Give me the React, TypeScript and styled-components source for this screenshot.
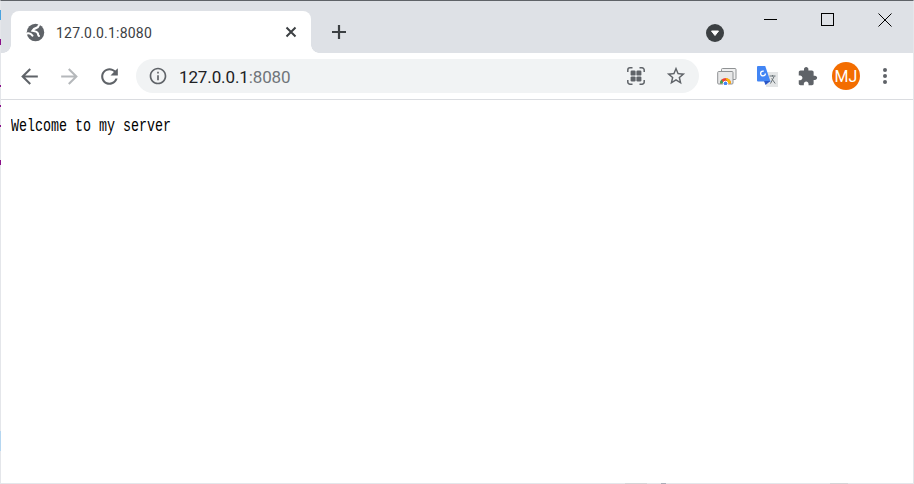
import React from "react";
import styled, { createGlobalStyle } from "styled-components";

const Global = createGlobalStyle`
  html, body { margin: 0; padding: 0; background: #fff; overflow: hidden; }
  #root { width: 914px; height: 484px; }
`;

const Win = styled.div`
  position: relative;
  width: 914px;
  height: 484px;
  box-sizing: border-box;
  display: flex;
  flex-direction: column;
  background: #fff;
  border-top: 1px solid #5f6368;
  border-left: 1px solid #e4e6ea;
  border-right: 1px solid #e4e6ea;
  border-bottom: 1px solid #e4e6ea;
  font-family: "Roboto", "Liberation Sans", sans-serif;
`;

const EdgeMark = styled.i<{ $top: number; $h: number; $c: string }>`
  position: absolute;
  left: -1px;
  top: ${(p) => p.$top - 1}px;
  width: 1px;
  height: ${(p) => p.$h}px;
  background: ${(p) => p.$c};
`;

const BottomMark = styled.i<{ $left: number; $w: number; $c: string }>`
  position: absolute;
  bottom: -1px;
  left: ${(p) => p.$left - 1}px;
  width: ${(p) => p.$w}px;
  height: 1px;
  background: ${(p) => p.$c};
`;

const TabStrip = styled.div`
  height: 52px;
  flex: none;
  background: #dee1e6;
  display: flex;
  align-items: flex-end;
  padding-left: 10px;
`;

const Tab = styled.div`
  position: relative;
  width: 300px;
  height: 42px;
  background: #fff;
  border-radius: 8px 8px 0 0;
  display: flex;
  align-items: center;
  padding: 0 12px 0 14px;
  box-sizing: border-box;
  &::before, &::after {
    content: "";
    position: absolute;
    bottom: 0;
    width: 8px;
    height: 8px;
    background: radial-gradient(circle at var(--cx) 0, #dee1e6 7.5px, #fff 8px);
  }
  &::before { left: -8px; --cx: 0; }
  &::after { right: -8px; --cx: 100%; }
`;

const TabTitle = styled.span`
  flex: 1;
  margin: 1px 0 0 10px;
  font-size: 14px;
  color: #3c4043;
  letter-spacing: 0.2px;
`;

const NewTab = styled.div`
  width: 28px;
  height: 28px;
  margin: 0 0 7px 14px;
  display: flex;
  align-items: center;
  justify-content: center;
`;

const Spacer = styled.div`
  flex: 1;
`;

const MediaBtn = styled.div`
  margin: 0 0 11px 0;
  width: 18px;
  height: 18px;
  display: flex;
`;

const Captions = styled.div`
  display: flex;
  align-self: flex-start;
  margin-left: 18px;
`;

const Caption = styled.div`
  width: 57px;
  height: 29px;
  display: flex;
  align-items: center;
  justify-content: center;
  padding-top: 8px;
  box-sizing: border-box;
`;

const Toolbar = styled.div`
  height: 46px;
  flex: none;
  box-sizing: border-box;
  display: flex;
  align-items: center;
  padding: 0 0 0 8px;
  background: #fff;
`;

const NavBtn = styled.div<{ $w?: number }>`
  width: ${(p) => p.$w ?? 40}px;
  height: 34px;
  flex: none;
  display: flex;
  align-items: center;
  justify-content: center;
`;

const Divider = styled.div`
  height: 1px;
  flex: none;
  background: #dadce0;
`;

const Omnibox = styled.div`
  width: 563px;
  height: 34px;
  flex: none;
  margin: 0 8px 0 7px;
  border-radius: 17px;
  background: #f1f3f4;
  display: flex;
  align-items: center;
  padding: 0 3px 0 12px;
  box-sizing: border-box;
`;

const Url = styled.div`
  flex: 1;
  margin: 1px 0 0 11px;
  font-size: 17px;
  color: #202124;
  letter-spacing: -0.12px;
`;

const UrlPort = styled.span`
  color: #70757a;
`;

const Avatar = styled.div`
  width: 28px;
  height: 28px;
  border-radius: 50%;
  background: #f36d00;
  color: #fff;
  font-size: 16px;
  display: flex;
  align-items: center;
  justify-content: center;
`;

const Page = styled.main`
  flex: 1;
  padding: 15px 10px;
  color: #000;
`;

const PageText = styled.span`
  display: inline-block;
  font-family: "Liberation Mono", monospace;
  font-size: 14.5px;
  line-height: 20px;
  white-space: nowrap;
  transform: scale(0.92, 1.25);
  transform-origin: left center;
`;

export default function App() {
  return (
    <Win>
      <Global />
      <EdgeMark $top={10} $h={10} $c="#4aa3df" />
      <EdgeMark $top={39} $h={6} $c="#8a0f8a" />
      <EdgeMark $top={85} $h={2} $c="#8a0f8a" />
      <EdgeMark $top={105} $h={2} $c="#8a0f8a" />
      <EdgeMark $top={125} $h={2} $c="#8a0f8a" />
      <EdgeMark $top={160} $h={5} $c="#8a0f8a" />
      <EdgeMark $top={431} $h={20} $c="#b5d6f0" />
      <BottomMark $left={625} $w={22} $c="#d4d5d8" />
      <BottomMark $left={661} $w={5} $c="#a9adb8" />
      <BottomMark $left={830} $w={18} $c="#d4d5d8" />
      <TabStrip>
        <Tab>
          <svg width="21" height="21" viewBox="0 0 24 24">
            <circle cx="12" cy="12" r="10" fill="#5f6368" />
            <path d="M3 13c3-.5 4 .5 5.5 2.5M16 3.5c-.5 2-1.5 3-3.5 3.5-2 .5-3 1.5-4 3 2.5.5 5 .5 6 2.5.8 1.5 0 3 1.5 3.5" fill="none" stroke="#fff" strokeWidth="2.4" strokeLinecap="round" />
          </svg>
          <TabTitle>127.0.0.1:8080</TabTitle>
          <svg width="16" height="16" viewBox="0 0 16 16" stroke="#3c4043" strokeWidth="2" fill="none">
            <path d="M3.5 3.5l9 9M12.5 3.5l-9 9" />
          </svg>
        </Tab>
        <NewTab>
          <svg width="16" height="16" viewBox="0 0 16 16" stroke="#3c4043" strokeWidth="2.2" fill="none">
            <path d="M8 1v14M1 8h14" />
          </svg>
        </NewTab>
        <Spacer />
        <MediaBtn>
          <svg width="18" height="18" viewBox="0 0 18 18">
            <circle cx="9" cy="9" r="9" fill="#3c4043" />
            <path d="M5.5 7h7L9 11.5z" fill="#fff" stroke="#fff" strokeWidth="1" strokeLinejoin="round" />
          </svg>
        </MediaBtn>
        <Captions>
          <Caption>
            <svg width="14" height="2" viewBox="0 0 14 2"><path d="M0 .5h13" stroke="#000" strokeWidth="1" /></svg>
          </Caption>
          <Caption>
            <svg width="13" height="13" viewBox="0 0 13 13"><rect x=".5" y=".5" width="12" height="12" fill="none" stroke="#000" /></svg>
          </Caption>
          <Caption>
            <svg width="14" height="14" viewBox="0 0 14 14"><path d="M.5.5l13 13M13.5.5l-13 13" stroke="#000" strokeWidth="1" fill="none" /></svg>
          </Caption>
        </Captions>
      </TabStrip>
      <Toolbar>
        <NavBtn>
          <svg width="25" height="25" viewBox="0 0 24 24" fill="#5f6368">
            <path d="M20 11H7.83l5.59-5.59L12 4l-8 8 8 8 1.41-1.41L7.83 13H20v-2z" />
          </svg>
        </NavBtn>
        <NavBtn>
          <svg width="25" height="25" viewBox="0 0 24 24" fill="#b5b8bb">
            <path d="M12 4l-1.41 1.41L16.17 11H4v2h12.17l-5.58 5.59L12 20l8-8z" />
          </svg>
        </NavBtn>
        <NavBtn>
          <svg width="25" height="25" viewBox="0 0 24 24" fill="#5f6368">
            <path d="M17.65 6.35C16.2 4.9 14.21 4 12 4c-4.42 0-7.99 3.58-7.99 8s3.57 8 7.99 8c3.73 0 6.84-2.55 7.73-6h-2.08c-.82 2.33-3.04 4-5.65 4-3.31 0-6-2.69-6-6s2.69-6 6-6c1.66 0 3.14.69 4.22 1.78L13 11h7V4l-2.35 2.35z" />
          </svg>
        </NavBtn>
        <Omnibox>
          <svg width="20" height="20" viewBox="0 0 24 24" fill="#5f6368">
            <path d="M11 7h2v2h-2zm0 4h2v6h-2zm1-9C6.48 2 2 6.48 2 12s4.48 10 10 10 10-4.48 10-10S17.52 2 12 2zm0 18c-4.41 0-8-3.59-8-8s3.59-8 8-8 8 3.59 8 8-3.59 8-8 8z" />
          </svg>
          <Url>127.0.0.1<UrlPort>:8080</UrlPort></Url>
          <NavBtn $w={40}>
            <svg width="18" height="18" viewBox="0 0 18 18" fill="#5f6368">
              <rect x="3.6" y="3.6" width="5" height="5" rx="1.2" />
              <rect x="9.4" y="3.6" width="5" height="5" rx="1.2" />
              <rect x="3.6" y="9.4" width="5" height="5" rx="1.2" />
              <rect x="9.4" y="9.4" width="5" height="5" rx="1.2" />
              <path d="M.8 5V3A2.2 2.2 0 0 1 3 .8h2.5M12.5.8H15A2.2 2.2 0 0 1 17.2 3v2M17.2 13v2a2.2 2.2 0 0 1-2.2 2.2h-2.5M5.5 17.2H3A2.2 2.2 0 0 1 .8 15v-2" fill="none" stroke="#5f6368" strokeWidth="1.5" />
            </svg>
          </NavBtn>
          <NavBtn $w={40}>
            <svg width="22" height="22" viewBox="0 0 24 24" fill="#5f6368">
              <path d="M22 9.24l-7.19-.62L12 2 9.19 8.63 2 9.24l5.46 4.73L5.82 21 12 17.27 18.18 21l-1.63-7.03L22 9.24zM12 15.4l-3.76 2.27 1-4.28-3.32-2.88 4.38-.38L12 6.1l1.71 4.04 4.38.38-3.32 2.88 1 4.28L12 15.4z" />
            </svg>
          </NavBtn>
        </Omnibox>
        <NavBtn>
          <svg width="20" height="17" viewBox="0 0 20 17">
            <rect x="4.5" y=".5" width="14.5" height="11" rx="1" fill="#f0f0f0" stroke="#8f9294" />
            <rect x=".7" y="3.5" width="15.3" height="12.5" rx="1" fill="#e8e8e8" stroke="#8f9294" />
            <path d="M3 15.5a5.5 5.5 0 0 1 11 0z" fill="#ea4335" />
            <path d="M8.5 10A5.5 5.5 0 0 1 14 15.5h-3z" fill="#fbbc05" />
            <path d="M3 15.5a5.5 5.5 0 0 1 1.6-3.9l1.9 3.9z" fill="#34a853" />
            <circle cx="8.5" cy="15.5" r="2.3" fill="#4285f4" stroke="#fff" />
          </svg>
        </NavBtn>
        <NavBtn>
          <svg width="21" height="21" viewBox="0 0 21 21">
            <rect x="9" y="6" width="12" height="15" fill="#e3e5e6" />
            <path d="M12.5 10h6M15.5 9v1.5M13.5 17.5l3.6-7M14.6 12.5l3.6 5" stroke="#6b7478" strokeWidth="1" fill="none" />
            <path d="M0 1a1 1 0 0 1 1-1h7.2L13.5 15.5H1a1 1 0 0 1-1-1z" fill="#4285f4" />
            <path d="M7 15h6.5L8.5 19z" fill="#2a56c6" />
            <circle cx="6" cy="7.5" r="2.4" fill="none" stroke="#fff" strokeWidth="1.3" strokeDasharray="11 4" />
          </svg>
        </NavBtn>
        <NavBtn>
          <svg width="21" height="21" viewBox="0 0 24 24" fill="#5f6368">
            <path d="M20.5 11H19V7c0-1.1-.9-2-2-2h-4V3.5C13 2.12 11.88 1 10.5 1S8 2.12 8 3.5V5H4c-1.1 0-1.99.9-1.99 2v3.8H3.5c1.49 0 2.7 1.21 2.7 2.7s-1.21 2.7-2.7 2.7H2V20c0 1.1.9 2 2 2h3.8v-1.5c0-1.49 1.21-2.7 2.7-2.7 1.49 0 2.7 1.21 2.7 2.7V22H17c1.1 0 2-.9 2-2v-4h1.5c1.38 0 2.5-1.12 2.5-2.5S21.88 11 20.5 11z" />
          </svg>
        </NavBtn>
        <NavBtn $w={38}>
          <Avatar>MJ</Avatar>
        </NavBtn>
        <NavBtn $w={40}>
          <svg width="6" height="18" viewBox="0 0 6 18" fill="#5f6368">
            <circle cx="3" cy="3" r="2" />
            <circle cx="3" cy="9" r="2" />
            <circle cx="3" cy="15" r="2" />
          </svg>
        </NavBtn>
      </Toolbar>
      <Divider />
      <Page><PageText>Welcome to my server</PageText></Page>
    </Win>
  );
}
